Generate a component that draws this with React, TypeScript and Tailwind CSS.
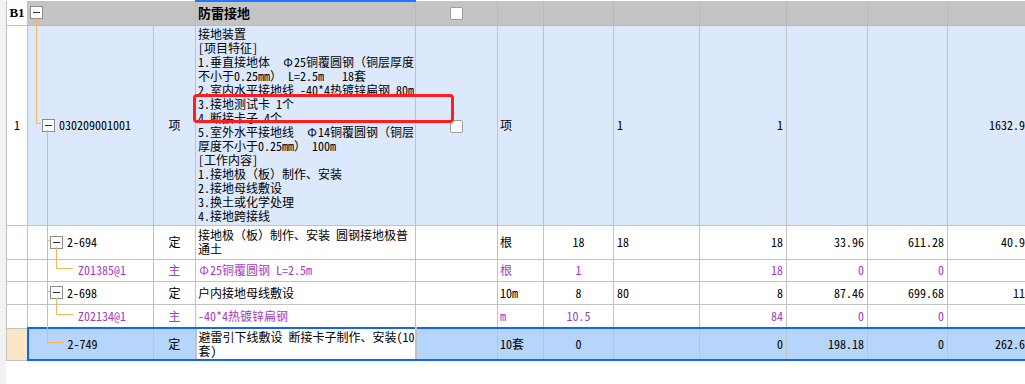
import type { ReactNode } from 'react'

type Item = {
  code: string
  fold: boolean
  kind: string
  name: string[]
  unit: string
  qty: string
  expr: string
  amount: string
  price: string
  total: string
  extra: string
  main?: boolean
  height: string
}

const featureLines = [
  '接地装置',
  '[项目特征]',
  '1.垂直接地体  Φ25铜覆圆钢（铜层厚度',
  '不小于0.25mm） L=2.5m   18套',
  '2.室内水平接地线 -40*4热镀锌扁钢 80m',
  '3.接地测试卡 1个',
  '4.断接卡子 4个',
  '5.室外水平接地线  Φ14铜覆圆钢（铜层',
  '厚度不小于0.25mm） 100m',
  '[工作内容]',
  '1.接地极（板）制作、安装',
  '2.接地母线敷设',
  '3.换土或化学处理',
  '4.接地跨接线',
]

const items: Item[] = [
  {
    code: '2-694', fold: true, kind: '定', name: ['接地极（板）制作、安装 圆钢接地极普', '通土'],
    unit: '根', qty: '18', expr: '18', amount: '18', price: '33.96', total: '611.28', extra: '40.96', height: 'h-[34px]',
  },
  {
    code: 'Z01385@1', fold: false, kind: '主', name: ['Φ25铜覆圆钢 L=2.5m'],
    unit: '根', qty: '1', expr: '', amount: '18', price: '0', total: '0', extra: '', main: true, height: 'h-[22px]',
  },
  {
    code: '2-698', fold: true, kind: '定', name: ['户内接地母线敷设'],
    unit: '10m', qty: '8', expr: '80', amount: '8', price: '87.46', total: '699.68', extra: '115', height: 'h-[23px]',
  },
  {
    code: 'Z02134@1', fold: false, kind: '主', name: ['-40*4热镀锌扁钢'],
    unit: 'm', qty: '10.5', expr: '', amount: '84', price: '0', total: '0', extra: '', main: true, height: 'h-[24px]',
  },
]

// 全角 Φ 占一个汉字宽
function fmt(line: string): ReactNode {
  const parts = line.split('Φ')
  return parts.map((p, i) => (
    <span key={i}>
      {i > 0 && <span className="inline-block w-[12px] text-center">Φ</span>}
      {p}
    </span>
  ))
}

function Fold() {
  return (
    <span className="inline-flex h-[13px] w-[13px] shrink-0 items-center justify-center border border-[#8c8c8c] bg-white">
      <span className="h-px w-[7px] bg-[#303030]" />
    </span>
  )
}

function Check() {
  return <span className="inline-block h-[13px] w-[13px] rounded-[2px] border border-[#9c9c9c] bg-white align-middle" />
}

function NameLines({ lines }: { lines: string[] }) {
  return (
    <div className="overflow-hidden pl-[2px]">
      {lines.map((l, i) => (
        <div key={i} className="h-[14px] whitespace-pre">
          {fmt(l)}
        </div>
      ))}
    </div>
  )
}

const td = 'border border-[#c2c2c2] p-0 align-middle'
const hd = 'border border-[#b9b9b9] p-0 align-middle'
const sel = 'border border-x-[#c2c2c2] border-y-[2px] border-y-[#1166f0] p-0 align-middle'

export default function App() {
  return (
    <div className="relative flex h-[384px] w-[1025px] overflow-hidden bg-white font-['Noto_Sans_Mono_CJK_SC','Noto_Sans_CJK_SC',sans-serif] text-[12px] leading-[14px] text-black">
      <div className="w-[6px] shrink-0 bg-[#f2f2f2]" />
      <div className="shrink-0">
        <table className="w-[1027px] table-fixed border-collapse">
          <colgroup>
            <col className="w-[21px]" />
            <col className="w-[126px]" />
            <col className="w-[42px]" />
            <col className="w-[220px]" />
            <col className="w-[82px]" />
            <col className="w-[46px]" />
            <col className="w-[70px]" />
            <col className="w-[86px]" />
            <col className="w-[87px]" />
            <col className="w-[81px]" />
            <col className="w-[80px]" />
            <col className="w-[86px]" />
          </colgroup>
          <tbody>
            <tr className="h-[24px] bg-[#c4c4c4]">
              <td className={`${td} border-t-0 bg-white text-center font-['Liberation_Serif',serif] text-[13px] font-bold`}>B1</td>
              <td className={`${hd} border-t-0 border-r-0 pl-[2px]`}>
                <div className="flex items-center">
                  <Fold />
                </div>
              </td>
              <td className={`${hd} border-t-0 border-l-0`} />
              <td className={`${hd} border-t-[2px] border-t-[#1f78ff] pl-[2px] text-[13px] font-bold`}>防雷接地</td>
              <td className={`${hd} border-t-0 text-center`}>
                <Check />
              </td>
              {Array.from({ length: 7 }).map((_, i) => (
                <td key={i} className={`${hd} border-t-0`} />
              ))}
            </tr>

            <tr className="h-[200px] bg-[#dce9fc]">
              <td className={`${td} bg-white text-center`}>1</td>
              <td className={`${td} pl-[14px]`}>
                <div className="flex items-center gap-[4px]">
                  <Fold />
                  <span>030209001001</span>
                </div>
              </td>
              <td className={`${td} text-center`}>项</td>
              <td className={td}>
                <NameLines lines={featureLines} />
              </td>
              <td className={`${td} text-center`}>
                <Check />
              </td>
              <td className={`${td} pl-[2px]`}>项</td>
              <td className={td} />
              <td className={`${td} pl-[3px]`}>1</td>
              <td className={`${td} pr-[3px] text-right`}>1</td>
              <td className={td} />
              <td className={td} />
              <td className={`${td} pr-[2px] text-right`}>1632.96</td>
            </tr>

            {items.map((it) => {
              const color = it.main ? 'text-[#a33dc2]' : ''
              return (
                <tr key={it.code} className={`${it.height} ${color}`}>
                  <td className={td} />
                  <td className={`${td} ${it.fold ? 'pl-[22px]' : 'pl-[50px]'}`}>
                    <div className="flex items-center gap-[4px]">
                      {it.fold && <Fold />}
                      <span>{it.code}</span>
                    </div>
                  </td>
                  <td className={`${td} text-center`}>{it.kind}</td>
                  <td className={td}>
                    <NameLines lines={it.name} />
                  </td>
                  <td className={td} />
                  <td className={`${td} pl-[2px]`}>{it.unit}</td>
                  <td className={`${td} text-center`}>{it.qty}</td>
                  <td className={`${td} pl-[3px]`}>{it.expr}</td>
                  <td className={`${td} pr-[3px] text-right`}>{it.amount}</td>
                  <td className={`${td} pr-[3px] text-right`}>{it.price}</td>
                  <td className={`${td} pr-[3px] text-right`}>{it.total}</td>
                  <td className={`${td} pr-[2px] text-right`}>{it.extra}</td>
                </tr>
              )
            })}

            <tr className="h-[32px] bg-[#b5d5fc]">
              <td className={`${td} bg-[#fde6c8]`} />
              <td className={`${sel} border-l-[2px] border-l-[#1166f0] pl-[39px]`}>2-749</td>
              <td className={`${sel} text-center`}>定</td>
              <td className={`${sel} border-x-[2px] border-x-[#1166f0] bg-white`}>
                <NameLines lines={['避雷引下线敷设 断接卡子制作、安装(10', '套)']} />
              </td>
              <td className={sel} />
              <td className={`${sel} pl-[2px]`}>10套</td>
              <td className={`${sel} text-center`}>0</td>
              <td className={sel} />
              <td className={`${sel} pr-[3px] text-right`}>0</td>
              <td className={`${sel} pr-[3px] text-right`}>198.18</td>
              <td className={`${sel} pr-[3px] text-right`}>0</td>
              <td className={`${sel} pr-[2px] text-right`}>262.62</td>
            </tr>
          </tbody>
        </table>
      </div>

      {/* tree connectors */}
      <svg className="pointer-events-none absolute left-0 top-0" width="120" height="384">
        <g stroke="#f8b458" strokeWidth="1" fill="none">
          <path d="M36.5 18 V123.5 H41" />
          <path d="M47.5 130 V342.5 H63" />
          <path d="M47.5 240.5 H50" />
          <path d="M47.5 291.5 H50" />
          <path d="M56.5 247 V268.5 H73" />
          <path d="M56.5 298 V314.5 H73" />
        </g>
      </svg>

      {/* annotation */}
      <div className="pointer-events-none absolute left-[193px] top-[94px] h-[29px] w-[261px] rounded-[4px] border-[3px] border-[#ff1c1c]" />
    </div>
  )
}
